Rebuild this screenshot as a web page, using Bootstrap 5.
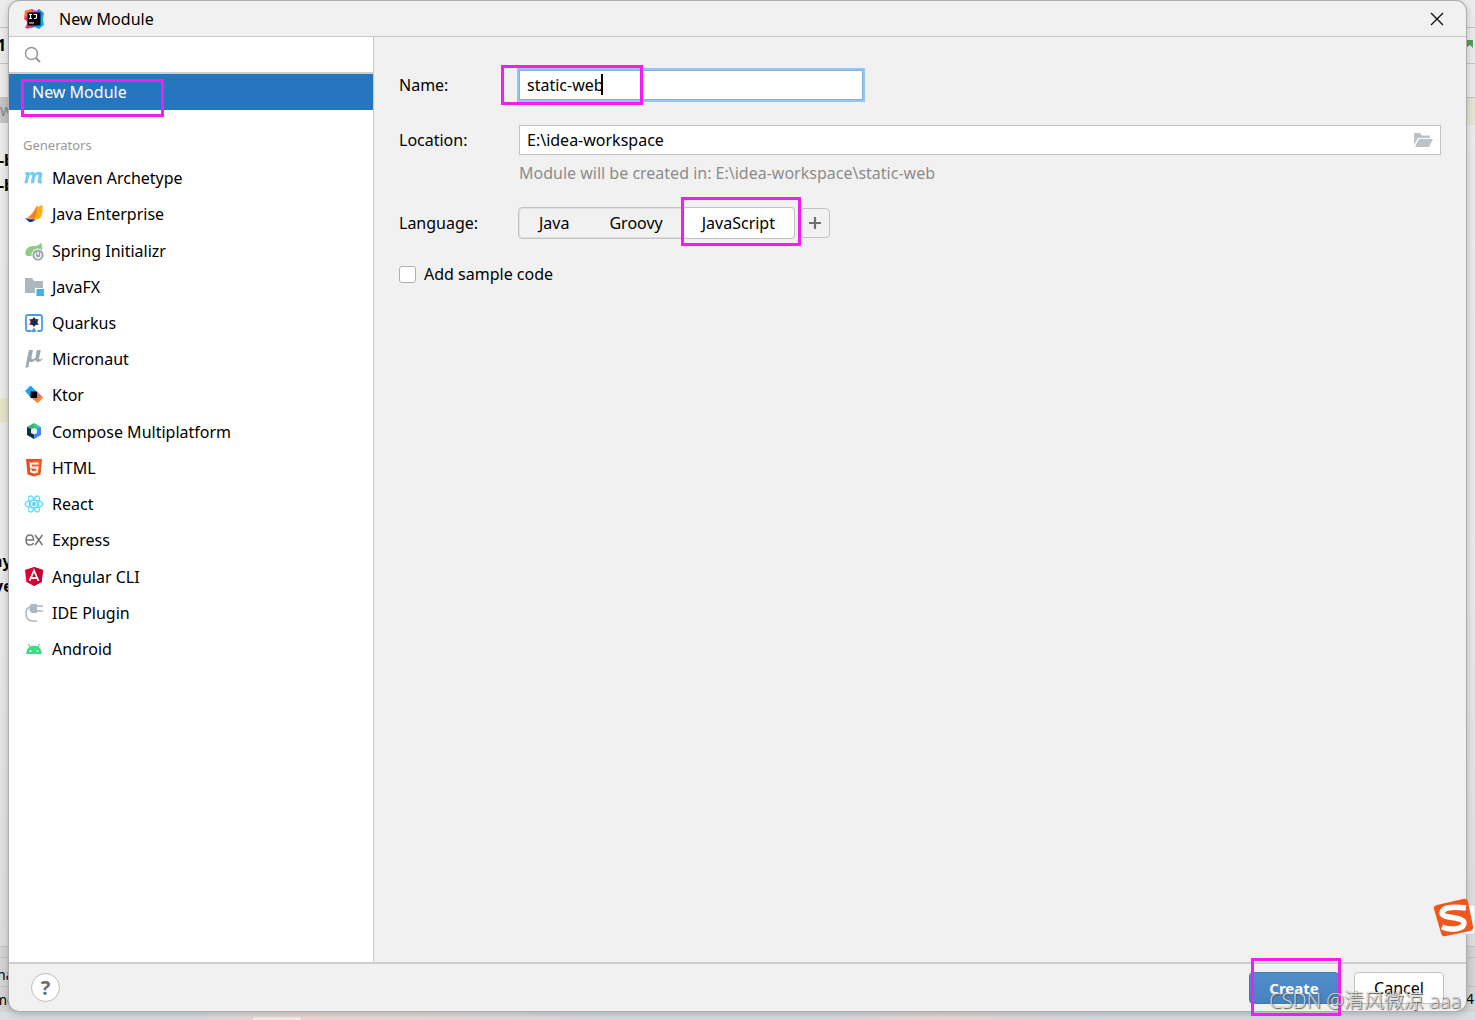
<!DOCTYPE html>
<html lang="en">
<head>
<meta charset="utf-8">
<meta name="viewport" content="width=device-width, initial-scale=1">
<title>New Module</title>
<link href="https://cdn.jsdelivr.net/npm/bootstrap@5.3.0/dist/css/bootstrap.min.css" rel="stylesheet">
<style>
  :root { --line: #c9c9c9; --marker: #f31df0; }
  body { font-family: "Noto Sans", "Noto Sans CJK SC", sans-serif; font-size: 16px; line-height: 24px; color: #000; background: #d9dde3; }
  .desktop { height: 100vh; padding: 1px 9px 9px; }
  /* IDE window showing round the dialog's edges */
  .ide { inset: 0 0 8px; background: linear-gradient(#ececec, #e9e9e9 60%, #dcdcdc); font-weight: 700; }
  .ide > * { position: absolute; line-height: 20px; white-space: nowrap; }
  .ide hr { left: 0; right: 0; margin: 0; opacity: 1; border-color: #c4c4c4; }
  .ide-tab { left: 0; width: 9px; top: 97px; height: 26px; background: #c4c4c4; color: #888; font-weight: 400; line-height: 26px; }
  .ide-line-l { left: 0; width: 9px; top: 398px; height: 24px; background: #e6e4c8; }
  .ide-line-r { right: 0; width: 9px; top: 98px; height: 27px; background: #e6e4d3; }
  .ide-status { left: 0; right: 0; top: 947px; bottom: 0; background: #d4d4d4; }
  .ide-flag { right: 2px; top: 40px; }
  .task-glow { left: 200px; bottom: 0; width: 900px; height: 8px; background: linear-gradient(90deg, #dcdde1, #ecdcd6 12%, #d9dde4 45%, #d9dde4 70%, #e8dad6 82%, #d5dde5); }
  .task-pill { left: 253px; bottom: 0; width: 48px; height: 3px; background: #f3f0ef; border-radius: 3px 3px 0 0; }

  .dialog-win { background: #f1f1f1; border-radius: 10px; box-shadow: 0 0 0 1px #adadad, 0 2px 8px rgba(0,0,0,.28); }
  .title-bar { height: 36px; border-bottom: 1px solid var(--line); padding: 0 20px 0 15px; gap: 15px; }
  .side { width: 365px; background: #fff; border-right: 1px solid var(--line); }
  .search-row { height: 37px; border-bottom: 2px solid #cecece; padding-left: 15px; }
  .search-row input { outline: 0; background: transparent; }
  .side-pick { height: 36px; background: #2675bf; color: #fff; padding-left: 23px; line-height: 36px; }
  .group-name { font-size: 13px; color: #999; padding: 23px 0 3px 14px; }
  .gen-list { height: 507px; }
  .gen-list a { color: #000; padding-left: 15px; gap: 8px; }
  .gen-list svg { width: 20px; height: 20px; flex: none; }
  .pane { padding: 31px 25px 0; }
  .field-label { width: 120px; flex: none; }
  .field { height: 30px; border: 1px solid #c4c4c4; background: #fff; padding: 0 7px; color: #000; line-height: 24px; }
  .field-name { width: 344px; border-color: #87afda; box-shadow: 0 0 0 2px #97c3f3; outline: 0; }
  .row-name { height: 34px; }
  .row-loc { margin-top: 23px; }
  .hint { margin: 6px 0 0 120px; color: #8c8c8c; }
  .row-lang { margin-top: 22px; }
  .seg { border: 1px solid #c2c2c2; border-radius: 4px; height: 32px; box-shadow: inset 0 0 0 1px #e0e0e0; margin-left: -1px; }
  .seg button { border: 0; background: none; padding: 0 20px; color: #000; }
  .seg .on { background: #fff; border: 1px solid #c2c2c2; border-radius: 4px; padding: 0 19px; margin: -1px; }
  .add-btn { width: 30px; height: 30px; border: 1px solid #c2c2c2; border-radius: 4px; background: #f1f1f1; margin-left: 5px; }
  .row-check { margin-top: 23px; gap: 8px; }
  .row-check .form-check-input { width: 17px; height: 17px; margin: 0; border: 1px solid #b0b0b0; border-radius: 3px; }
  .foot { height: 49px; border-top: 2px solid #cecece; padding: 0 22px; }
  .help-btn { width: 29px; height: 29px; border: 1px solid #bbb; background: #fff; border-radius: 50%; color: #6e6e6e; font-weight: 700; font-size: 20px; line-height: 26px; }
  .foot-btns { gap: 15px; }
  .foot-btn { width: 90px; height: 32px; border-radius: 4px; border: 1px solid #c2c2c2; background: #fff; color: #000; padding: 0; }
  .foot-btn.go { background: linear-gradient(#528dcb, #4682c0); border-color: #4479b0; color: #fff; font-weight: 700; font-size: 15px; }

  /* marker frames and other things lying over the dialog */
  .mk { position: absolute; border: 3px solid var(--marker); pointer-events: none; z-index: 3; }
  .mk-pick { left: 12px; top: 5px; width: 143px; height: 38px; }
  .mk-name { left: -18px; top: -5px; width: 142px; height: 40px; }
  .mk-lang { right: -7px; top: -11px; width: 120px; height: 49px; }
  .mk-create { left: 2px; top: -14px; width: 90px; height: 58px; }
  .caret { position: absolute; left: 82px; top: 4px; width: 2px; height: 21px; background: #000; }
  .wm { right: 14px; bottom: 5px; font-size: 20px; line-height: 28px; color: rgba(255,255,255,.75); text-shadow: 1px 1px 1px #555, 0 0 1px #777; font-family: "Open Sans", "Noto Sans CJK SC", sans-serif; font-weight: 300; z-index: 5; }
  .ime { right: 0; top: 896px; z-index: 5; }
</style>
<script src="https://cdn.jsdelivr.net/npm/bootstrap@5.3.0/dist/js/bootstrap.bundle.min.js"></script>
</head>
<body>
<div class="desktop position-relative overflow-hidden d-flex">
  <div class="ide position-absolute overflow-hidden">
    <div class="ide-status"></div>
    <hr style="top:27px"><hr style="top:63px"><hr style="top:97px"><hr style="top:946px"><hr style="top:957px"><hr style="top:986px">
    <span style="left:-3px;top:35px">1</span>
    <div class="ide-tab">w</div>
    <span style="left:-1px;top:150px">-b</span>
    <span style="left:-1px;top:175px">-b</span>
    <div class="ide-line-l"></div><div class="ide-line-r"></div>
    <span style="left:-8px;top:551px">ny</span>
    <span style="left:-6px;top:576px">ve</span>
    <span class="fw-normal" style="left:-3px;top:965px;font-size:14px">ha</span>
    <span class="fw-normal" style="left:-6px;top:990px;font-size:14px">me</span>
    <span class="fw-normal" style="right:1px;top:989px;font-size:14px">4</span>
    <svg class="ide-flag" width="7" height="9" viewBox="0 0 7 9"><path d="M0 0h7v8L4 5 1 7H0z" fill="#4f9f5c"/></svg>
  </div>
  <div class="task-glow position-absolute"></div><div class="task-pill position-absolute"></div>

  <main class="dialog-win position-relative flex-fill d-flex flex-column">
    <header class="title-bar d-flex align-items-center flex-shrink-0">
      <svg width="20" height="20" viewBox="0 0 20 20"><defs><linearGradient id="ij" x1="0" x2="1" y1="0.2" y2=".6"><stop stop-color="#fe315d"/><stop offset=".4" stop-color="#c757a8"/><stop offset=".6" stop-color="#3175e8"/><stop offset="1" stop-color="#08b9f5"/></linearGradient></defs><path d="M1 2 8 0l4 2 3-2 5 4-1 6 1 6-5 4-4-2-9 2 2-6-4-5 2-3z" fill="url(#ij)"/><path d="M0 10l2-3 2 6-3 6 8-1-3-4z" fill="#fe315d"/><path d="M1 2 8 0l-3 6-5 2z" fill="#f97a2f"/><path d="M3.500 3.500h13v13h-13z"/><path d="M5 5.500h3M6.500 5.500v4M5 9.500h3M9.500 5.500h3v3q0 1-1.500 1H10M5 14h5" fill="none" stroke="#fff" stroke-width="1.200"/></svg>
      <span>New Module</span>
      <button type="button" class="btn p-0 border-0 ms-auto d-flex" aria-label="Close"><svg width="18" height="18" viewBox="0 0 18 18"><path d="M3 3l12 12M15 3 3 15" stroke="#111" stroke-width="1.400"/></svg></button>
    </header>
    <div class="d-flex flex-fill">
      <aside class="side flex-shrink-0">
        <label class="search-row d-flex align-items-center" aria-label="Search"><svg width="18" height="18" viewBox="0 0 18 18" fill="none" stroke="#8f979e" stroke-width="1.500"><circle cx="7.500" cy="7.500" r="6"/><path d="M12 12l4 4" stroke-width="2"/></svg><input type="text" class="border-0 flex-fill"></label>
        <div class="side-pick position-relative">New Module<span class="mk mk-pick"></span></div>
        <div class="group-name">Generators</div>
        <nav class="gen-list d-flex flex-column">
          <a href="#" class="d-flex flex-fill align-items-center text-decoration-none"><svg viewBox="0 0 20 20"><path d="M1.500 4h3.700l-.3 1.500Q6.500 3.700 8.500 3.700q2 0 2.500 1.800 1.700-1.800 4-1.800 4 0 3.300 4l-1.100 4.300q-.2 1.200 1.300.8l-.5 2.500q-5 1-4.400-2.500l1-4.400q.3-1.700-1.100-1.700-1.600 0-2.100 2.100l-1.500 6.500H6.500L8.100 8.400q.3-1.700-1-1.700-1.600 0-2.200 2.300l-1.400 6.300H.3L2.400 6.500H1z" fill="#74cdf0"/></svg>Maven Archetype</a>
          <a href="#" class="d-flex flex-fill align-items-center text-decoration-none"><svg viewBox="0 0 20 20"><path d="M3 14Q9 10 12 3l2-2-2 14z" fill="#f98e17"/><path d="M13 5q2-4 5.500-4 .5 9-1.500 12-2 3-7 2 3-5 3-10z" fill="#feb112"/><path d="M12 4q-3 7-7 10l5 1q4-6 2-11z" fill="#f57f1c"/><path d="M1 14l5 1 6 .5L8 18H5z" fill="#29349a"/></svg>Java Enterprise</a>
          <a href="#" class="d-flex flex-fill align-items-center text-decoration-none"><svg viewBox="0 0 20 20"><path d="M17 1.500q2 5.500 1 8.500l-7 5H3q-3-2-1-6t8-4q5 0 7-3.500z" fill="#8fcb84"/><circle cx="14" cy="14" r="6.500" fill="#fff"/><circle cx="14" cy="14" r="5.600" fill="#9ba5ad"/><path d="M12 12a3 3 0 1 0 4 0M14 10.500V14" stroke="#fff" stroke-width="1.300" fill="none"/></svg>Spring Initializr</a>
          <a href="#" class="d-flex flex-fill align-items-center text-decoration-none"><svg viewBox="0 0 20 20"><path d="M1 1h7l2 3h9v7h-8v5H1z" fill="#adb7be"/><path d="M12.500 12H20v7h-7.500z" fill="#3eb2e2"/></svg>JavaFX</a>
          <a href="#" class="d-flex flex-fill align-items-center text-decoration-none"><svg viewBox="0 0 20 20"><path d="M7.500 18H4q-2 0-2-2V4q0-2 2-2h12q2 0 2 2v12q0 2-2 2h-2.500" fill="none" stroke="#4c98ed" stroke-width="1.800"/><path d="M5 6l5 1 5-1-1.500 3L15 12l-5-1-5 1 1.500-3z" fill="#e03a67"/><path d="M10 4l1.500 2L14 6.500 13 9l1 2.500-2.500.5L10 14l-1.500-2-2.500-.500L7 9 6 6.500 8.500 6z" fill="#1e2c4c"/><path d="M7 19l3-4.500 1.500 2.500 1 2z" fill="#4c98ed"/></svg>Quarkus</a>
          <a href="#" class="d-flex flex-fill align-items-center text-decoration-none"><svg viewBox="0 0 20 20"><path d="M5 1h4L7.500 8q-.4 2.200 1.300 2.200 2.200 0 3-3.200L13 1h3.800l-1.700 8q-.2 1.500.9 1.500 1.200 0 2.500-1.500l.5.700Q16.500 13 14 13q-2.400 0-2.500-2.300Q9.700 13 7.400 13q-1.200 0-2-.5Q4.500 15.500 4.500 18l-3 1Q2 14.500 5 1z" fill="#9da8b0"/></svg>Micronaut</a>
          <a href="#" class="d-flex flex-fill align-items-center text-decoration-none"><svg viewBox="0 0 20 20"><defs><linearGradient id="kt" x1="0" y1="1" x2="1" y2="0"><stop stop-color="#ff8a18"/><stop offset="1" stop-color="#c757bc"/></linearGradient></defs><path d="M1 6l5.500-5.500L13 7l-6 6z" fill="#12a7fb"/><path d="M7 12.500 13 6.500l6 6-5.500 5.500z" fill="url(#kt)"/><path d="M13.500 18 19 12.500l-2-2-5.500 5.500z" fill="#ff8a18"/><path d="M6.500 6.500h6.500v6.500H6.500z"/></svg>Ktor</a>
          <a href="#" class="d-flex flex-fill align-items-center text-decoration-none"><svg viewBox="0 0 20 20"><path d="M10 1 3 5v3l7 2z" fill="#36b777"/><path d="M10 1l7 4v3l-7 2z" fill="#42c783"/><path d="M3 5v8l7 4V9z" fill="#0c3144"/><path d="M17 5v8l-7 4V9z" fill="#4287f5"/><path d="M10 6l3 1.500v3.500L10 12.500 7 11V7.500z" fill="#e8f4f7"/></svg>Compose Multiplatform</a>
          <a href="#" class="d-flex flex-fill align-items-center text-decoration-none"><svg viewBox="0 0 20 20"><path d="M2 1h16l-1.500 15.500L10 18.500l-6.500-2z" fill="#e44d26"/><path d="M10 2.500h6.500L15 15.500l-5 1.500z" fill="#f16529"/><path d="M14.500 5.500H6.500L7 9.500h6.500L13 13.500l-3 1-3-1-.2-2" fill="none" stroke="#fff" stroke-width="1.900"/></svg>HTML</a>
          <a href="#" class="d-flex flex-fill align-items-center text-decoration-none"><svg viewBox="0 0 20 20" fill="none" stroke="#61dafb" stroke-width="1.300"><ellipse cx="10" cy="10" rx="9" ry="3.600"/><ellipse cx="10" cy="10" rx="9" ry="3.600" transform="rotate(60 10 10)"/><ellipse cx="10" cy="10" rx="9" ry="3.600" transform="rotate(120 10 10)"/><circle cx="10" cy="10" r="1.500" fill="#61dafb"/></svg>React</a>
          <a href="#" class="d-flex flex-fill align-items-center text-decoration-none"><svg viewBox="0 0 20 20" fill="none" stroke="#757575" stroke-width="1.500"><path d="M2 10h7.500Q9.500 5 5.800 5T2 10q0 5 4 5 2.500 0 3.500-2M11 5l7.500 10M18.500 5 11 15"/></svg>Express</a>
          <a href="#" class="d-flex flex-fill align-items-center text-decoration-none"><svg viewBox="0 0 20 20"><path d="M10 0l9 3-1.400 12L10 19l-7.600-4L1 3z" fill="#dd0031"/><path d="M10 0l9 3-1.400 12L10 19z" fill="#c3002f"/><path d="M5.500 14 10 3.500 14.500 14M7.500 11h5" fill="none" stroke="#fff" stroke-width="1.800"/></svg>Angular CLI</a>
          <a href="#" class="d-flex flex-fill align-items-center text-decoration-none"><svg viewBox="0 0 20 20"><path d="M7 1h6v9H8L5.500 8V3z" fill="#aeb8bf"/><path d="M13 3h6M13 8h6M6 4Q2 5 2 11t6 7h5" fill="none" stroke="#aeb8bf" stroke-width="1.600"/></svg>IDE Plugin</a>
          <a href="#" class="d-flex flex-fill align-items-center text-decoration-none"><svg viewBox="0 0 20 20"><path d="M2 15q.4-8 8-8.500 7.600.5 8 8.500z" fill="#3ddc84"/><path d="M4.500 5l2 4M15.500 5l-2 4" stroke="#3ddc84" stroke-width="1.100"/><circle cx="6.500" cy="12" r="1" fill="#fff"/><circle cx="13.500" cy="12" r="1" fill="#fff"/></svg>Android</a>
        </nav>
      </aside>
      <form class="pane flex-fill">
        <div class="row-name d-flex align-items-center">
          <label class="field-label" for="name">Name:</label>
          <div class="position-relative"><input id="name" class="field field-name d-block" type="text" value="static-web"><span class="caret"></span><span class="mk mk-name"></span></div>
        </div>
        <div class="row-loc d-flex align-items-center">
          <label class="field-label" for="loc">Location:</label>
          <div class="field d-flex align-items-center flex-fill">
            <input id="loc" class="border-0 p-0 flex-fill" type="text" value="E:\idea-workspace">
            <svg width="19" height="15" viewBox="0 0 19 15" fill="#bcc3c8"><path d="M0 0h6l2 2.500h8V5H4L0 12z"/><path d="M5 6h14l-4 8H1z"/></svg>
          </div>
        </div>
        <div class="hint">Module will be created in: E:\idea-workspace\static-web</div>
        <div class="row-lang d-flex align-items-center">
          <span class="field-label">Language:</span>
          <div class="seg d-flex position-relative" role="group" aria-label="Language"><button type="button">Java</button><button type="button">Groovy</button><button type="button" class="on">JavaScript</button><span class="mk mk-lang"></span></div>
          <button type="button" class="add-btn p-0 d-flex align-items-center justify-content-center" aria-label="Add language"><svg width="14" height="14" viewBox="0 0 14 14"><path d="M7 1v12M1 7h12" stroke="#6e6e6e" stroke-width="2.200"/></svg></button>
        </div>
        <div class="row-check d-flex align-items-center">
          <input class="form-check-input" type="checkbox" id="sample"><label for="sample">Add sample code</label>
        </div>
      </form>
    </div>
    <footer class="foot d-flex align-items-center flex-shrink-0">
      <button type="button" class="help-btn p-0" aria-label="Help">?</button>
      <div class="foot-btns ms-auto d-flex"><div class="position-relative"><button type="button" class="foot-btn go">Create</button><span class="mk mk-create"></span></div><button type="button" class="foot-btn">Cancel</button></div>
    </footer>
  </main>
  <svg class="ime position-absolute" width="42" height="42" viewBox="0 0 42 42"><path d="M30 9h12v29H30z" fill="#fff" stroke="#ccd5df"/><path d="M4 9 30 3q4-1 5 3l5 24q1 4-3 5l-24 5q-4 1-5-3L1 13q-1-3 3-4z" fill="#f2561d"/><path d="M33 12Q10 9 9 17c0 6 22 3 22 10 0 6-12 8-22 4" fill="none" stroke="#fff" stroke-width="5.500"/></svg>
  <div class="wm position-absolute text-nowrap">CSDN @清风微凉 aaa</div>
</div>
</body>
</html>
